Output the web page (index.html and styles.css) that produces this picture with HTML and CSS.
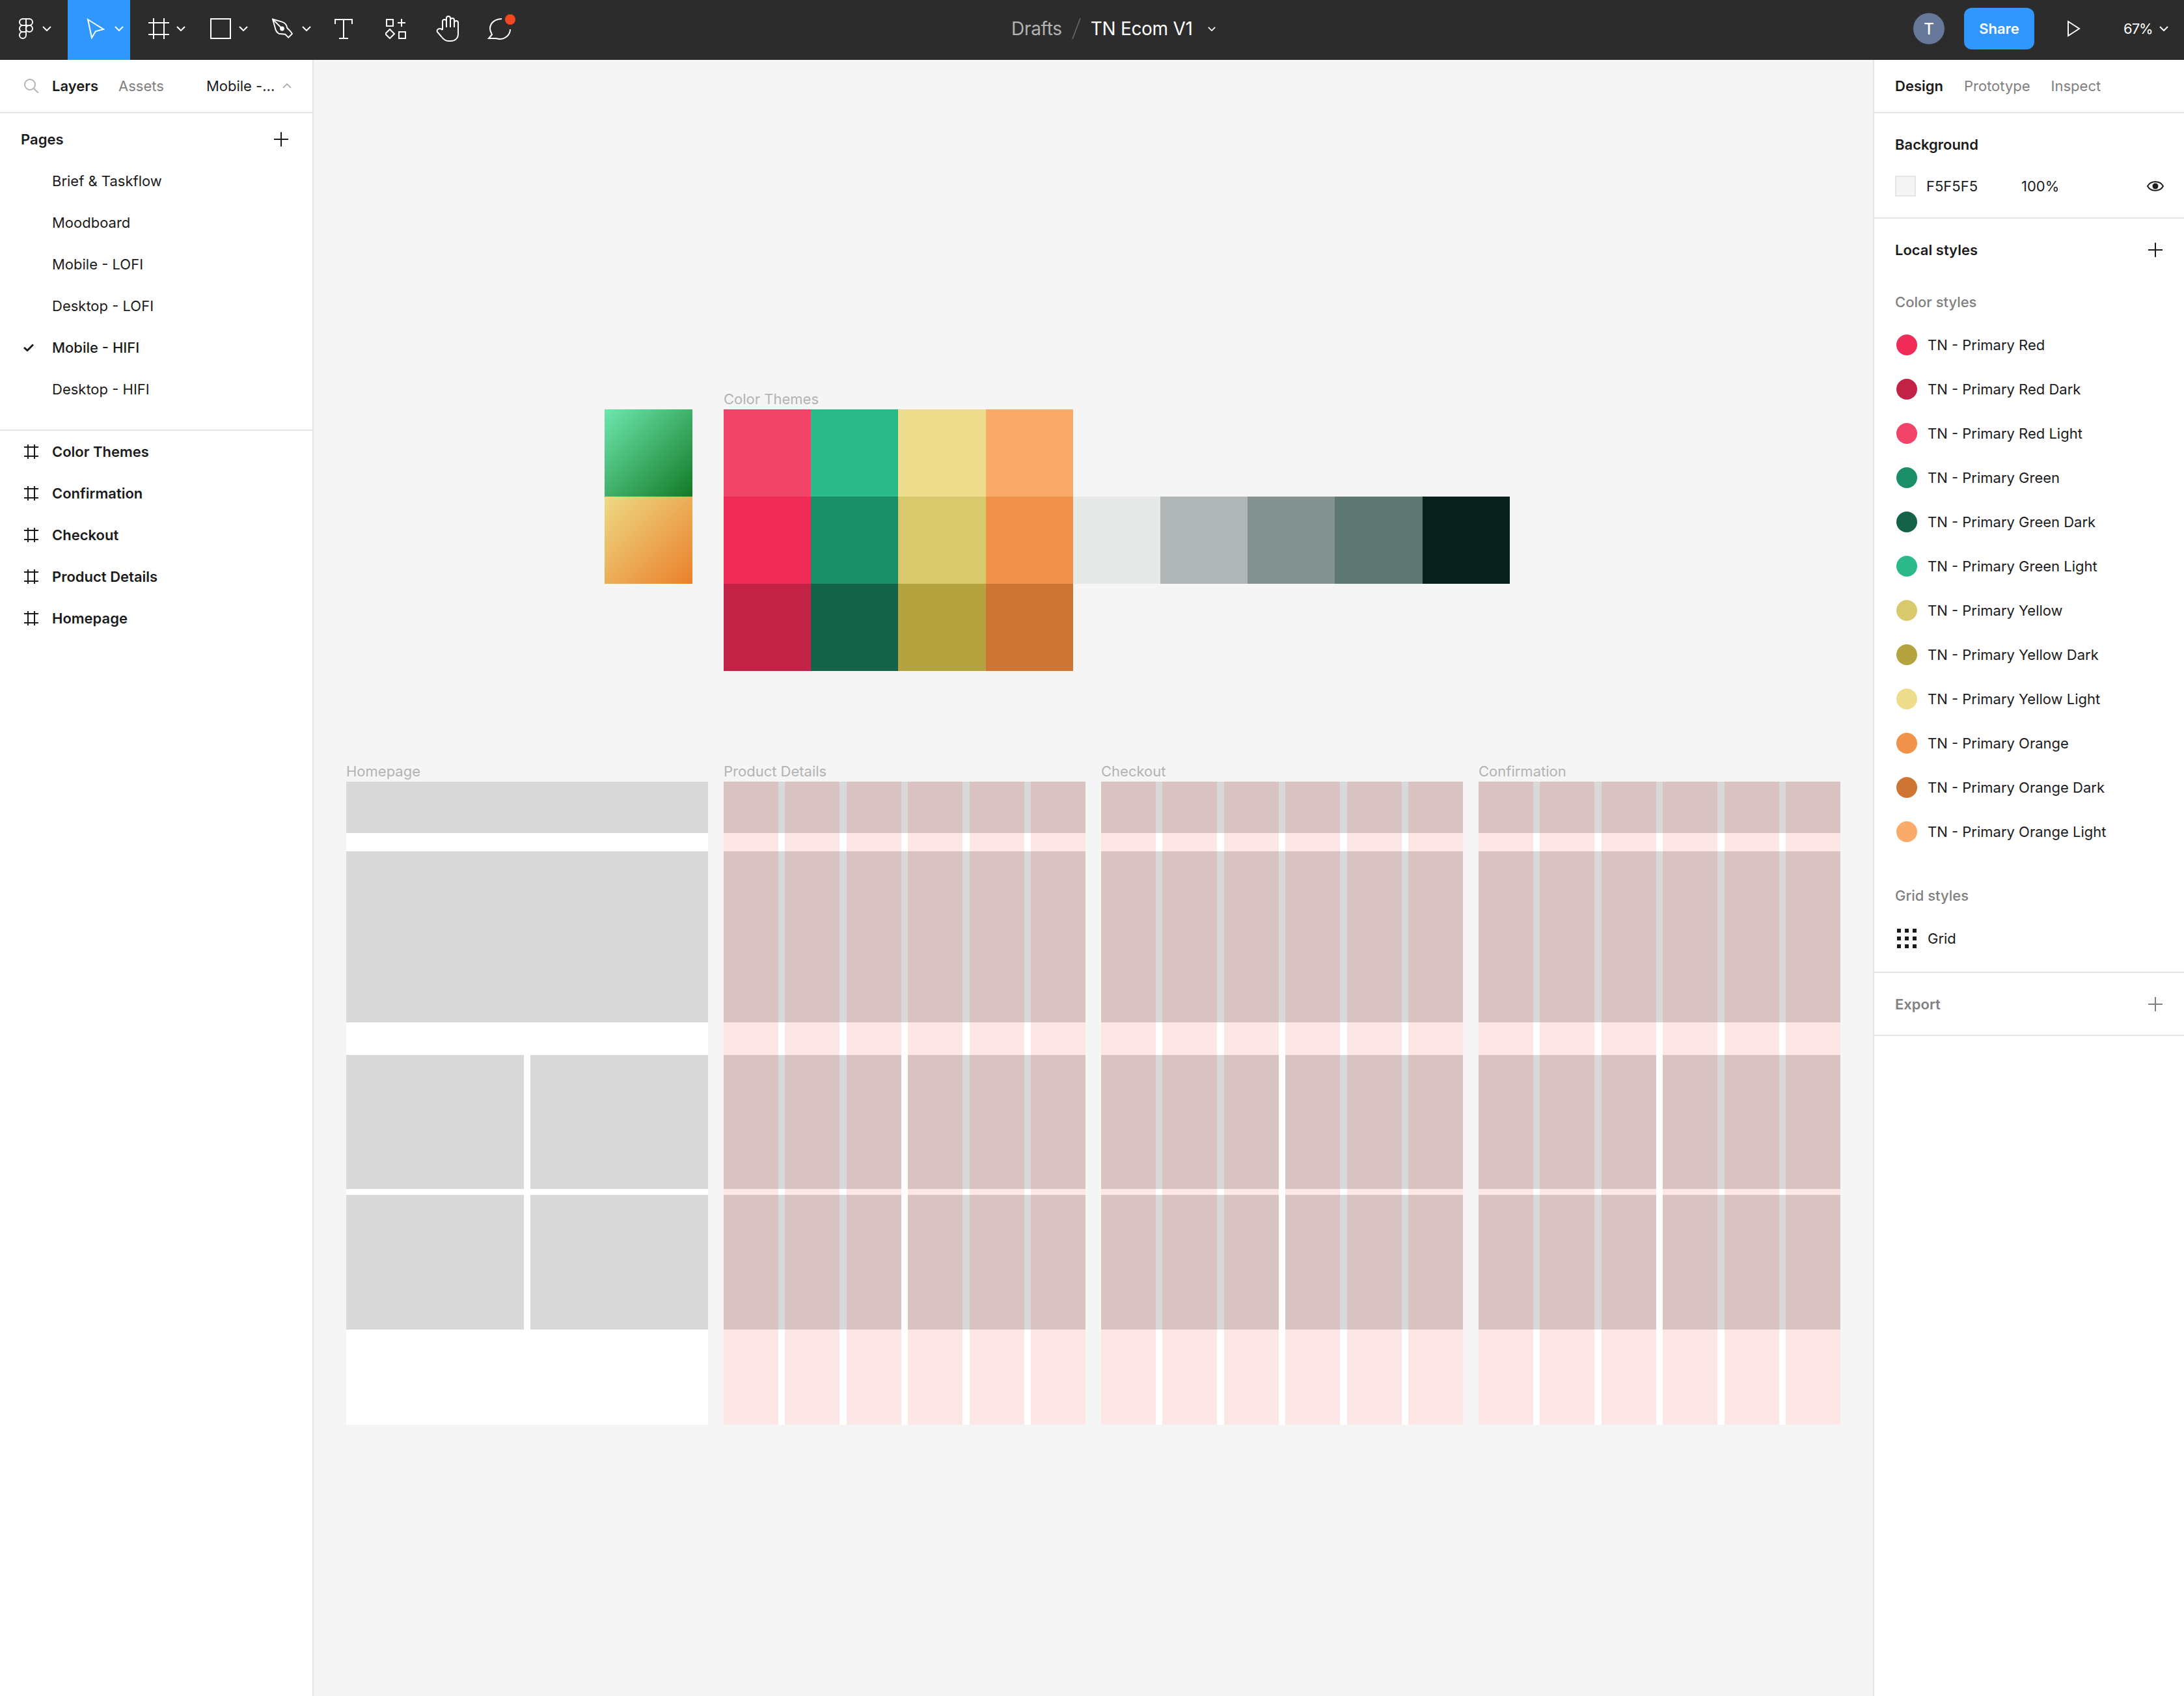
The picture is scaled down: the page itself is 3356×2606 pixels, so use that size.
FILE: index.html
```html
<!DOCTYPE html>
<html lang="en">
<head>
    <meta charset="UTF-8">
    <meta name="viewport" content="width=device-width, initial-scale=1.0">
    <title>TN Ecom V1</title>
    <link rel="stylesheet" href="styles.css">
</head>
<body>

<header class="topbar">
    <div class="tools">
        <div class="tool tool-logo">
            <svg width="24" height="32" viewBox="0 0 24 32" class="icon"><path d="M12 1H7a5 5 0 0 0 0 10h5z"/><path d="M12 1h5a5 5 0 0 1 0 10h-5z"/><path d="M12 11H7a5 5 0 0 0 0 10h5z"/><circle cx="17" cy="16" r="5"/><path d="M7 21h5v5a5 5 0 1 1-5-5z"/></svg>
            <svg width="14" height="8" viewBox="0 0 14 8" class="icon chevron"><path d="M1 1l6 6 6-6"/></svg>
        </div>
        <div class="tool tool-active">
            <svg width="28" height="32" viewBox="0 0 28 32" class="icon"><path d="M2 2l24 15-12 3-6 10z"/></svg>
            <svg width="14" height="8" viewBox="0 0 14 8" class="icon chevron"><path d="M1 1l6 6 6-6"/></svg>
        </div>
        <div class="tool">
            <svg width="32" height="32" viewBox="0 0 32 32" class="icon"><path d="M8 0v32M24 0v32M0 7h32M0 25h32"/></svg>
            <svg width="14" height="8" viewBox="0 0 14 8" class="icon chevron"><path d="M1 1l6 6 6-6"/></svg>
        </div>
        <div class="tool tool-rect">
            <svg width="32" height="32" viewBox="0 0 32 32" class="icon"><rect x="1" y="1" width="30" height="30"/></svg>
            <svg width="14" height="8" viewBox="0 0 14 8" class="icon chevron"><path d="M1 1l6 6 6-6"/></svg>
        </div>
        <div class="tool tool-pen">
            <svg width="32" height="32" viewBox="0 0 33 32" class="icon"><path d="M1 1l14 4q8 2 9 10l5 5 3 4-6 6-5-5-10-1q-5-3-6-9z"/><path d="M1 1l15 15"/><circle cx="16" cy="16" r="2.5" class="icon-dot"/></svg>
            <svg width="14" height="8" viewBox="0 0 14 8" class="icon chevron"><path d="M1 1l6 6 6-6"/></svg>
        </div>
        <div class="tool tool-plain">
            <svg width="28" height="32" viewBox="0 0 28 32" class="icon"><path d="M1 9V2h26v7M14 2v29M7 31h14"/></svg>
        </div>
        <div class="tool tool-plain">
            <svg width="32" height="32" viewBox="0 0 32 32" class="icon"><rect x="2" y="2" width="10" height="10"/><path d="M19 7h12M25 1v12"/><path d="M7 17l7 7-7 7-7-7z"/><rect x="21" y="21" width="10" height="10"/></svg>
        </div>
        <div class="tool tool-plain">
            <svg width="36" height="40" viewBox="0 0 36 40" class="icon"><path d="M10 22V9a3 3 0 0 1 6 0v9M16 18V4a3 3 0 0 1 6 0v14M22 18V7a3 3 0 0 1 6 0v11M28 18v-7a3 3 0 0 1 6 0v17c0 7-5 11-11 11h-4c-5 0-8-3-11-7l-6-7c-2-4 4-7 8-3"/></svg>
        </div>
        <div class="tool tool-plain tool-comment">
            <svg width="36" height="33" viewBox="0 0 36 33" class="icon"><path d="M22 1C12 1 4 7 4 16c0 4 2 7 3 9l-5 6h10c3 0 4 1 7 1 9 0 16-7 16-15"/></svg>
            <span class="notify-dot"></span>
        </div>
    </div>

    <div class="doc-title">
        <span class="doc-folder">Drafts</span>
        <svg width="14" height="32" viewBox="0 0 14 32" class="doc-slash"><path d="M13 0L1 32"/></svg>
        <span class="doc-name">TN Ecom V1</span>
        <svg width="12" height="7" viewBox="0 0 14 8" class="icon chevron"><path d="M1 1l6 6 6-6"/></svg>
    </div>

    <div class="top-actions">
        <div class="avatar">T</div>
        <div class="share-btn">Share</div>
        <svg width="20" height="26" viewBox="0 0 20 26" class="icon play"><path d="M1 2l17 11L1 24z"/></svg>
        <div class="zoom-level">67%</div>
        <svg width="14" height="8" viewBox="0 0 14 8" class="icon chevron"><path d="M1 1l6 6 6-6"/></svg>
    </div>
</header>

<div class="workspace">
    <aside class="left-panel">
        <div class="panel-tabs left-tabs">
            <svg width="24" height="22" viewBox="0 0 24 22" class="search-icon"><circle cx="10" cy="9" r="8"/><path d="M16 15l7 7"/></svg>
            <span class="tab tab-active layers-tab">Layers</span>
            <span class="tab assets-tab">Assets</span>
            <span class="page-picker">Mobile -...</span>
            <svg width="14" height="8" viewBox="0 0 14 8" class="picker-arrow"><path d="M1 7l6-6 6 6"/></svg>
        </div>

        <div class="pages">
            <div class="section-head">
                <span class="bold">Pages</span>
                <svg width="22" height="22" viewBox="0 0 22 22" class="plus"><path d="M0 11h22M11 0v22"/></svg>
            </div>
            <div class="list-row">Brief &amp; Taskflow</div>
            <div class="list-row">Moodboard</div>
            <div class="list-row">Mobile - LOFI</div>
            <div class="list-row">Desktop - LOFI</div>
            <div class="list-row list-row-current">
                <svg width="16" height="12" viewBox="0 0 16 12" class="check"><path d="M1 6l5 4.500 9-9"/></svg>
                Mobile - HIFI
            </div>
            <div class="list-row">Desktop - HIFI</div>
        </div>

        <div class="layers">
            <div class="list-row bold"><svg width="22" height="22" viewBox="0 0 22 22" class="hash"><path d="M6 0v22M16 0v22M0 4h22M0 18h22"/></svg>Color Themes</div>
            <div class="list-row bold"><svg width="22" height="22" viewBox="0 0 22 22" class="hash"><path d="M6 0v22M16 0v22M0 4h22M0 18h22"/></svg>Confirmation</div>
            <div class="list-row bold"><svg width="22" height="22" viewBox="0 0 22 22" class="hash"><path d="M6 0v22M16 0v22M0 4h22M0 18h22"/></svg>Checkout</div>
            <div class="list-row bold"><svg width="22" height="22" viewBox="0 0 22 22" class="hash"><path d="M6 0v22M16 0v22M0 4h22M0 18h22"/></svg>Product Details</div>
            <div class="list-row bold"><svg width="22" height="22" viewBox="0 0 22 22" class="hash"><path d="M6 0v22M16 0v22M0 4h22M0 18h22"/></svg>Homepage</div>
        </div>
    </aside>

    <main class="canvas">
        <div class="gradient-stack">
            <div class="gradient-green"></div>
            <div class="gradient-orange"></div>
        </div>

        <div class="theme-frame">
            <div class="frame-label">Color Themes</div>
            <div class="swatch-row">
                <div class="swatch red-light"></div>
                <div class="swatch green-light"></div>
                <div class="swatch yellow-light"></div>
                <div class="swatch orange-light"></div>
            </div>
            <div class="swatch-row">
                <div class="swatch red"></div>
                <div class="swatch green"></div>
                <div class="swatch yellow"></div>
                <div class="swatch orange"></div>
                <div class="swatch grey-1"></div>
                <div class="swatch grey-2"></div>
                <div class="swatch grey-3"></div>
                <div class="swatch grey-4"></div>
                <div class="swatch grey-5"></div>
            </div>
            <div class="swatch-row">
                <div class="swatch red-dark"></div>
                <div class="swatch green-dark"></div>
                <div class="swatch yellow-dark"></div>
                <div class="swatch orange-dark"></div>
            </div>
        </div>

        <div class="screens">
            <div class="screen">
                <div class="frame-label">Homepage</div>
                <div class="screen-body">
                    <div class="block block-nav"></div>
                    <div class="block block-hero"></div>
                    <div class="block-pair"><div class="block"></div><div class="block"></div></div>
                    <div class="block-pair block-pair-last"><div class="block"></div><div class="block"></div></div>
                </div>
            </div>

            <div class="screen">
                <div class="frame-label">Product Details</div>
                <div class="screen-body">
                    <div class="block block-nav"></div>
                    <div class="block block-hero"></div>
                    <div class="block-pair"><div class="block"></div><div class="block"></div></div>
                    <div class="block-pair block-pair-last"><div class="block"></div><div class="block"></div></div>
                    <div class="layout-grid"><i></i><i></i><i></i><i></i><i></i><i></i></div>
                </div>
            </div>

            <div class="screen">
                <div class="frame-label">Checkout</div>
                <div class="screen-body">
                    <div class="block block-nav"></div>
                    <div class="block block-hero"></div>
                    <div class="block-pair"><div class="block"></div><div class="block"></div></div>
                    <div class="block-pair block-pair-last"><div class="block"></div><div class="block"></div></div>
                    <div class="layout-grid"><i></i><i></i><i></i><i></i><i></i><i></i></div>
                </div>
            </div>

            <div class="screen">
                <div class="frame-label">Confirmation</div>
                <div class="screen-body">
                    <div class="block block-nav"></div>
                    <div class="block block-hero"></div>
                    <div class="block-pair"><div class="block"></div><div class="block"></div></div>
                    <div class="block-pair block-pair-last"><div class="block"></div><div class="block"></div></div>
                    <div class="layout-grid"><i></i><i></i><i></i><i></i><i></i><i></i></div>
                </div>
            </div>
        </div>
    </main>

    <aside class="right-panel">
        <div class="panel-tabs right-tabs">
            <span class="tab tab-active">Design</span>
            <span class="tab">Prototype</span>
            <span class="tab">Inspect</span>
        </div>

        <section class="prop-section">
            <div class="prop-head bold">Background</div>
            <div class="bg-row">
                <div class="bg-swatch"></div>
                <span class="bg-hex">F5F5F5</span>
                <span class="bg-opacity">100%</span>
                <svg width="26" height="16" viewBox="0 0 26 16" class="eye"><path d="M1 8c5-9 19-9 24 0-5 9-19 9-24 0z"/><circle cx="13" cy="8" r="4.500"/></svg>
            </div>
        </section>

        <section class="prop-section styles-section">
            <div class="prop-head bold">
                Local styles
                <svg width="22" height="22" viewBox="0 0 22 22" class="plus"><path d="M0 11h22M11 0v22"/></svg>
            </div>
            <div class="group-label">Color styles</div>
            <div class="style-row"><span class="dot red"></span>TN - Primary Red</div>
            <div class="style-row"><span class="dot red-dark"></span>TN - Primary Red Dark</div>
            <div class="style-row"><span class="dot red-light"></span>TN - Primary Red Light</div>
            <div class="style-row"><span class="dot green"></span>TN - Primary Green</div>
            <div class="style-row"><span class="dot green-dark"></span>TN - Primary Green Dark</div>
            <div class="style-row"><span class="dot green-light"></span>TN - Primary Green Light</div>
            <div class="style-row"><span class="dot yellow"></span>TN - Primary Yellow</div>
            <div class="style-row"><span class="dot yellow-dark"></span>TN - Primary Yellow Dark</div>
            <div class="style-row"><span class="dot yellow-light"></span>TN - Primary Yellow Light</div>
            <div class="style-row"><span class="dot orange"></span>TN - Primary Orange</div>
            <div class="style-row"><span class="dot orange-dark"></span>TN - Primary Orange Dark</div>
            <div class="style-row"><span class="dot orange-light"></span>TN - Primary Orange Light</div>
            <div class="group-label group-label-grid">Grid styles</div>
            <div class="style-row">
                <span class="grid-dots"><i></i><i></i><i></i><i></i><i></i><i></i><i></i><i></i><i></i></span>
                Grid
            </div>
        </section>

        <section class="prop-section export-section">
            <span class="export-label">Export</span>
            <svg width="22" height="22" viewBox="0 0 22 22" class="plus plus-muted"><path d="M0 11h22M11 0v22"/></svg>
        </section>
    </aside>
</div>

</body>
</html>
```

FILE: styles.css
```css
* {
    box-sizing: border-box;
}
body {
    margin: 0;
    width: 3356px;
    height: 2606px;
    overflow: hidden;
    font-family: Inter, "Noto Sans", sans-serif;
    font-size: 22px;
    color: #1b1b1b;
    background: #fff;
}
.bold {
    font-weight: 600;
}
svg {
    display: block;
    flex-shrink: 0;
    fill: none;
}

/* top bar */
.topbar {
    height: 92px;
    background: #2c2c2c;
    display: flex;
    align-items: center;
    color: #fff;
}
.icon {
    stroke: #fff;
    stroke-width: 2;
}
.icon-dot {
    fill: #fff;
}
.chevron {
    stroke-width: 2;
}
.tools {
    display: flex;
    height: 92px;
    width: 808px;
}
.tool {
    width: 96px;
    padding-left: 28px;
    padding-bottom: 4px;
    display: flex;
    align-items: center;
    gap: 11px;
}
.tool-logo {
    width: 104px;
    gap: 13px;
}
.tool-active {
    background: #2f97fd;
    padding-left: 29px;
    gap: 15px;
}
.tool-rect {
    padding-left: 27px;
    gap: 12px;
}
.tool-pen {
    padding-left: 26px;
    gap: 14px;
}
.tool-plain {
    width: 80px;
    padding-left: 0;
    justify-content: center;
    position: relative;
}
.tool-comment svg {
    margin-right: 3px;
}
.notify-dot {
    position: absolute;
    left: 48px;
    top: 22px;
    width: 16px;
    height: 16px;
    border-radius: 50%;
    background: #f24822;
}
.doc-title {
    margin-left: 746px;
    padding-bottom: 4px;
    display: flex;
    align-items: center;
    font-size: 28px;
    letter-spacing: -0.3px;
}
.doc-folder {
    color: #b3b3b3;
}
.doc-slash {
    margin: 0 15px;
    stroke: #6a6a6a;
    stroke-width: 1.5;
}
.doc-title .chevron {
    margin-left: 23px;
}
.top-actions {
    margin-left: auto;
    padding-right: 24px;
    padding-bottom: 4px;
    display: flex;
    align-items: center;
}
.avatar {
    width: 48px;
    height: 48px;
    border-radius: 50%;
    background: #667799;
    display: flex;
    align-items: center;
    justify-content: center;
    font-size: 24px;
    font-weight: 500;
}
.share-btn {
    margin-left: 30px;
    width: 108px;
    height: 64px;
    border-radius: 12px;
    background: #2f97fd;
    display: flex;
    align-items: center;
    justify-content: center;
    font-weight: 600;
}
.play {
    margin-left: 51px;
}
.zoom-level {
    width: 42px;
    margin-left: 66px;
    margin-right: 13px;
    letter-spacing: -1px;
    white-space: nowrap;
}

/* layout */
.workspace {
    display: flex;
    height: 2514px;
}
.left-panel {
    width: 482px;
    border-right: 2px solid #e5e5e5;
    background: #fff;
}
.right-panel {
    width: 478px;
    border-left: 2px solid #e5e5e5;
    background: #fff;
}
.canvas {
    flex: 1;
    position: relative;
    background: #f5f5f5;
}

/* panels */
.panel-tabs {
    height: 82px;
    border-bottom: 2px solid #e5e5e5;
    display: flex;
    align-items: center;
}
.tab {
    color: #808080;
}
.tab-active {
    color: #1b1b1b;
    font-weight: 600;
}
.left-tabs {
    padding-left: 36px;
}
.search-icon {
    stroke: #b3b3b3;
    stroke-width: 2;
}
.layers-tab {
    margin-left: 20px;
}
.assets-tab {
    margin-left: 31px;
}
.page-picker {
    margin-left: 65px;
}
.picker-arrow {
    margin-left: 12px;
    stroke: #b3b3b3;
    stroke-width: 2;
}
.pages {
    height: 488px;
    border-bottom: 2px solid #e5e5e5;
    padding-top: 8px;
}
.section-head {
    height: 64px;
    padding: 0 37px 0 32px;
    display: flex;
    align-items: center;
    justify-content: space-between;
}
.plus {
    stroke: #1b1b1b;
    stroke-width: 2;
}
.plus-muted {
    stroke: #808080;
}
.list-row {
    height: 64px;
    padding-left: 80px;
    display: flex;
    align-items: center;
    position: relative;
}
.list-row-current {
    font-weight: 500;
}
.check {
    position: absolute;
    left: 36px;
    top: 26px;
    stroke: #1b1b1b;
    stroke-width: 3;
}
.hash {
    position: absolute;
    left: 37px;
    top: 21px;
    stroke: #1b1b1b;
    stroke-width: 2;
}

/* right panel */
.right-tabs {
    padding-left: 32px;
    gap: 32px;
}
.prop-section {
    padding: 16px 32px;
    border-bottom: 2px solid #e5e5e5;
}
.prop-head {
    height: 64px;
    display: flex;
    align-items: center;
    justify-content: space-between;
    padding-right: 1px;
}
.bg-row {
    height: 64px;
    display: flex;
    align-items: center;
}
.bg-swatch {
    width: 32px;
    height: 32px;
    background: #f5f5f5;
    border: 2px solid #e5e5e5;
}
.bg-hex {
    margin-left: 16px;
    width: 146px;
}
.eye {
    margin-left: auto;
    margin-right: -1px;
    stroke: #1b1b1b;
    stroke-width: 2;
}
.eye circle {
    fill: #1b1b1b;
    stroke: none;
}
.styles-section {
    padding-bottom: 17px;
}
.group-label {
    height: 64px;
    margin-top: 16px;
    display: flex;
    align-items: center;
    color: #808080;
    font-weight: 500;
}
.group-label-grid {
    margin-top: 32px;
}
.style-row {
    height: 68px;
    display: flex;
    align-items: center;
    gap: 16px;
}
.dot {
    width: 32px;
    height: 32px;
    border-radius: 50%;
    margin-left: 2px;
}
.grid-dots {
    width: 30px;
    height: 30px;
    margin-left: 3px;
    margin-right: 1px;
    display: grid;
    grid-template-columns: repeat(3, 6px);
    grid-template-rows: repeat(3, 6px);
    justify-content: space-between;
    align-content: space-between;
}
.grid-dots i {
    background: #1b1b1b;
}
.export-section {
    height: 97px;
    padding: 0 33px 0 32px;
    display: flex;
    align-items: center;
    justify-content: space-between;
}
.export-label {
    color: #808080;
    font-weight: 600;
}

/* colours, shared by the canvas swatches and the style dots */
.red { background: #f02b57; }
.red-dark { background: #c22245; }
.red-light { background: #f24368; }
.green { background: #1a8e66; }
.green-dark { background: #146349; }
.green-light { background: #2cba8b; }
.yellow { background: #d8c96d; }
.yellow-dark { background: #b4a33e; }
.yellow-light { background: #eddd8c; }
.orange { background: #f09249; }
.orange-dark { background: #cf7534; }
.orange-light { background: #faab6a; }
.grey-1 { background: #e6e9e8; }
.grey-2 { background: #afb6b5; }
.grey-3 { background: #84938f; }
.grey-4 { background: #5e7770; }
.grey-5 { background: #081f1c; }

/* canvas frames */
.frame-label {
    height: 32px;
    line-height: 32px;
    color: #b3b3b3;
    white-space: nowrap;
}
.gradient-stack {
    position: absolute;
    left: 447.4px;
    top: 536.7px;
    width: 135px;
}
.gradient-green {
    height: 134.200px;
    background: linear-gradient(135deg, #6ee7ae, #127a26);
}
.gradient-orange {
    height: 134.200px;
    background: linear-gradient(135deg, #eeda84, #ea7f2b);
}
.theme-frame {
    position: absolute;
    left: 630px;
    top: 504.7px;
}
.swatch-row {
    display: flex;
}
.swatch {
    width: 134.200px;
    height: 134.200px;
}
.screens {
    position: absolute;
    left: 50px;
    top: 1077.2px;
    display: flex;
    gap: 24px;
}
.screen {
    width: 556px;
}
.screen-body {
    position: relative;
    height: 988px;
    background: #fff;
}
.block {
    background: #d9d9d9;
}
.block-nav {
    height: 78.600px;
}
.block-hero {
    height: 263px;
    margin-top: 28.400px;
}
.block-pair {
    height: 206.300px;
    margin-top: 50px;
    display: flex;
    justify-content: space-between;
}
.block-pair .block {
    width: 272.600px;
}
.block-pair-last {
    height: 206.600px;
    margin-top: 8.700px;
}
.layout-grid {
    position: absolute;
    inset: 0;
    display: flex;
    gap: 10.700px;
}
.layout-grid i {
    flex: 1;
    background: rgba(235, 10, 10, 0.1);
}
```
